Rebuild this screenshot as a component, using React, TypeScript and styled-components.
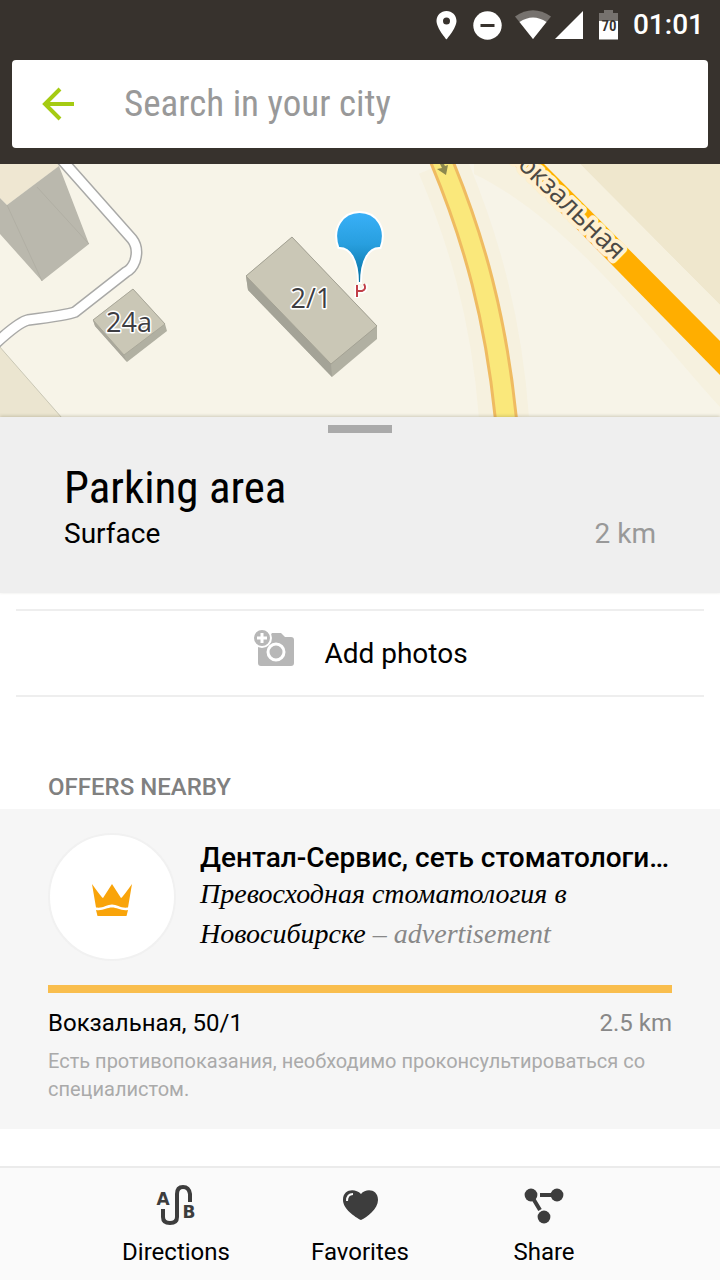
import React from "react";
import styled, { createGlobalStyle } from "styled-components";

const GlobalStyle = createGlobalStyle`
  *, *::before, *::after { box-sizing: border-box; }
  body {
    margin: 0;
    background: #ffffff;
    color: #000000;
    font-family: Roboto, "Liberation Sans", sans-serif;
  }
  h1, h2, h3, p { margin: 0; font-weight: 400; }
  button { border: 0; background: none; padding: 0; font: inherit; color: inherit; cursor: pointer; }
`;

const narrow = `"Roboto Condensed", "Arial Narrow", Roboto, sans-serif`;

const Screen = styled.div`
  display: flex;
  flex-direction: column;
  min-height: 100vh;
`;

const TopBar = styled.header`
  padding: 0 12px 16px;
  background: #37322d;
`;

const StatusBar = styled.div`
  display: flex;
  align-items: center;
  justify-content: flex-end;
  height: 60px;
  padding: 0 4px 10px 0;
  color: #ffffff;
`;

const StatusIcons = styled.svg`
  display: block;
  flex: none;
`;

const Clock = styled.time`
  margin-left: 12px;
  font-size: 28px;
  line-height: 32px;
  font-weight: 500;
`;

const SearchForm = styled.form`
  display: flex;
  align-items: center;
  height: 88px;
  padding-left: 28px;
  border-radius: 4px;
  background: #ffffff;
`;

const BackButton = styled.button`
  display: flex;
  flex: none;
  margin-right: 44px;
`;

const SearchInput = styled.input`
  flex: 1;
  min-width: 0;
  height: 84px;
  padding: 0 0 2px;
  border: 0;
  outline: 0;
  background: transparent;
  font-family: ${narrow};
  font-size: 37px;
  &::placeholder { color: #999999; opacity: 1; }
`;

const MapView = styled.svg`
  display: block;
  width: 100%;
  height: 253px;
  background: #f7f4e8;
`;

const MapLabel = styled.text`
  font-family: "Open Sans", "Noto Sans", sans-serif;
  font-size: 27px;
  fill: #3d3d42;
  stroke: #ffffff;
  stroke-width: 3px;
  stroke-linejoin: round;
  paint-order: stroke;
`;

const StreetLabel = styled(MapLabel)`
  fill: #4c4a45;
  stroke: #fff0d0;
  stroke-width: 8px;
`;

const PlaceHead = styled.section`
  padding: 8px 64px 43px;
  background: #efefef;
  box-shadow: 0 -1px 3px rgba(90, 85, 50, 0.25);
`;

const Handle = styled.div`
  width: 64px;
  height: 8px;
  margin: 0 auto 25px;
  background: #aaaaaa;
`;

const PlaceTitle = styled.h1`
  font-family: ${narrow};
  font-size: 45px;
  line-height: 60px;
`;

const Row = styled.div`
  display: flex;
  justify-content: space-between;
`;

const PlaceRow = styled(Row)`
  font-size: 28px;
  line-height: 32px;
`;

const Distance = styled.span`
  color: #999999;
`;

const OfferDistance = styled.span`
  color: #888888;
`;

const AddPhotos = styled.button`
  display: flex;
  align-items: center;
  justify-content: center;
  gap: 28px;
  height: 88px;
  margin: 16px;
  border-top: 2px solid #eeeeee;
  border-bottom: 2px solid #eeeeee;
  font-size: 28px;
`;

const OffersTitle = styled.h2`
  padding: 60px 48px 8px;
  color: #808080;
  font-size: 24px;
  line-height: 28px;
  font-weight: 500;
`;

const Offer = styled.article`
  padding: 24px 48px 26px;
  background: #f6f6f6;
`;

const OfferHead = styled.div`
  display: flex;
  gap: 24px;
  margin-bottom: 24px;
`;

const Logo = styled.div`
  display: flex;
  align-items: center;
  justify-content: center;
  flex: none;
  width: 128px;
  height: 128px;
  border: 2px solid #f1f1f1;
  border-radius: 50%;
  background: #ffffff;
`;

const OfferText = styled.div`
  flex: 1;
  min-width: 0;
  padding-top: 9px;
`;

const OfferName = styled.h3`
  overflow: hidden;
  white-space: nowrap;
  font-size: 28px;
  line-height: 32px;
  font-weight: 500;
`;

const Slogan = styled.p`
  max-width: 440px;
  font-family: "Liberation Serif", serif;
  font-size: 28px;
  line-height: 40px;
  font-style: italic;
`;

const AdMark = styled.span`
  color: #888888;
`;

const Accent = styled.div`
  height: 8px;
  background: #f9be4e;
`;

const OfferAddress = styled(Row)`
  margin-top: 16px;
  font-size: 24px;
  line-height: 28px;
`;

const Disclaimer = styled.p`
  margin-top: 10px;
  color: #aaaaaa;
  font-size: 20px;
  line-height: 28px;
`;

const Actions = styled.nav`
  position: sticky;
  bottom: 0;
  display: flex;
  height: 114px;
  margin-top: auto;
  padding: 0 84px;
  border-top: 2px solid #ebebeb;
  background: #fafafa;
`;

const Action = styled.button`
  display: flex;
  flex: 1;
  flex-direction: column;
  align-items: center;
  gap: 13px;
  padding-top: 17px;
  font-size: 24px;
  line-height: 28px;
`;

const ActionIcon = styled.svg`
  display: block;
  width: 44px;
  height: 40px;
  color: #3d3d3d;
`;

function StatusGlyphs() {
  return (
    <StatusIcons width="186" height="48" viewBox="435 0 186 48" aria-hidden="true">
      <path fill="#fff" fillRule="evenodd" d="M446.500 10C441 10 436.500 14.300 436.500 20c0 7 10 18.500 10 18.500S456.500 27 456.500 20c0-5.700-4.500-10-10-10zm0 6.500a3.500 3.500 0 1 1 0 7 3.500 3.500 0 0 1 0-7z" />
      <circle cx="487.500" cy="24.500" r="14.200" fill="#fff" />
      <rect x="480.500" y="23" width="14" height="3" fill="#37322d" />
      <path fill="#76726e" d="M515 15.500Q533 3 551 15.500L533 38z" />
      <path fill="#fff" d="M519.500 21Q533 12 546.500 21L533 38z" />
      <path fill="#fff" d="M583 10v28h-28z" />
      <path fill="#76726e" d="M599 12h5v-3h9v3h5v8h-19z" />
      <path fill="#fff" d="M599 20h19v18.500h-19z" />
      <text x="609" y="30" textAnchor="middle" fontFamily="Roboto Condensed, Roboto, sans-serif" fontSize="15" fontWeight="600" fill="#37322d">70</text>
    </StatusIcons>
  );
}

function CityMap() {
  return (
    <MapView viewBox="0 164 720 253" preserveAspectRatio="xMidYMid slice" role="img" aria-label="Map">
      <defs>
        <linearGradient id="pin" x1="0" y1="0" x2="0" y2="1">
          <stop offset="0" stopColor="#39b0f8" />
          <stop offset="0.45" stopColor="#289fdf" />
          <stop offset="1" stopColor="#036f9f" />
        </linearGradient>
      </defs>
      <path fill="#efe7d2" d="M0 164h62L7 205l-7-7z" />
      <path fill="#ebe5d0" stroke="#c9c7b5" d="M-1 346L62 418H-1z" />
      <path fill="#efe7cd" d="M580 164h140v141z" />
      <path fill="none" stroke="#f6f1df" strokeWidth="50" d="M442 164C470 230 496 310 504 418" />
      <path fill="#f6f1df" d="M474 164h106L720 305v102C650 330 570 220 474 174z" />
      <path fill="#bab8ad" d="M59 166L89 244 42 281 0 234v-36l7 7z" />
      <path fill="none" stroke="#b1afa4" d="M7 205l35 76M37 187l52 57" />
      <path fill="none" stroke="#a9a9a7" strokeWidth="12" strokeLinejoin="round" d="M62 160L132 239Q139 248 135 261Q132 269 126 272L75 312Q68 315 28 320Q19 322 -4 343" />
      <path fill="none" stroke="#fff" strokeWidth="9" strokeLinejoin="round" d="M62 160L132 239Q139 248 135 261Q132 269 126 272L75 312Q68 315 28 320Q19 322 -4 343" />
      <path fill="#b1b0a2" d="M93 320l40-31 32 35 2 7-40 31-32-36z" />
      <path fill="#aaa89c" d="M93 320l31 35 3 7-32-36z" />
      <path fill="#cac7b6" stroke="#aaa89a" d="M93 320l40-31 32 35-41 31z" />
      <path fill="#b1b0a2" d="M246 276l46-39 85 89v13l-45 38-84-87z" />
      <path fill="#a4a397" d="M246 276l85 88 1 13-84-87z" />
      <path fill="#cac7b6" stroke="#a4a294" d="M246 276l46-39 85 89-46 38z" />
      <path fill="none" stroke="#efbb61" strokeWidth="24" d="M439 155C475 240 496 320 506 420" />
      <path fill="none" stroke="#fae87b" strokeWidth="18" d="M439 155C475 240 496 320 506 420" />
      <path fill="#8c884e" d="M440 164l2 4-5 1 9 6 2-10-3 1-1-2z" />
      <path fill="#ffae00" d="M513 164h31L720 341v34z" />
      <StreetLabel textAnchor="end" transform="translate(615 261) rotate(44)">Вокзальная</StreetLabel>
      <MapLabel x="129" y="332" textAnchor="middle">24a</MapLabel>
      <MapLabel x="311" y="308" textAnchor="middle">2/1</MapLabel>
      <path fill="none" stroke="#fff" strokeWidth="5" d="M357 298v-13M357 291h6q3-1 2-7" />
      <path fill="none" stroke="#c13f48" strokeWidth="2" d="M357 297v-12M357 291h5q5-2 2-7" />
      <path fill="url(#pin)" stroke="#fff" strokeWidth="2" d="M338.500 248C331 228 343 212 359.500 212S388 228 380.500 248C369 247 361 260 361 283h-3C358 260 350 247 338.500 248z" />
    </MapView>
  );
}

export default function App() {
  return (
    <Screen>
      <GlobalStyle />
      <TopBar>
        <StatusBar>
          <StatusGlyphs />
          <Clock>01:01</Clock>
        </StatusBar>
        <SearchForm role="search" onSubmit={(e: React.FormEvent) => e.preventDefault()}>
          <BackButton type="button" aria-label="Back">
            <svg width="40" height="40" viewBox="0 0 40 40" fill="none" stroke="#a5cb12" strokeWidth="4" aria-hidden="true">
              <path d="M34 20H6M20 5L5 20l15 15" />
            </svg>
          </BackButton>
          <SearchInput type="search" aria-label="Search in your city" placeholder="Search in your city" />
        </SearchForm>
      </TopBar>

      <CityMap />

      <PlaceHead>
        <Handle />
        <PlaceTitle>Parking area</PlaceTitle>
        <PlaceRow>
          <span>Surface</span>
          <Distance>2 km</Distance>
        </PlaceRow>
      </PlaceHead>

      <AddPhotos type="button">
        <svg width="44" height="48" viewBox="1 0 44 48" aria-hidden="true">
          <path fill="#b7b7b7" d="M9 8h9l3-4h9l4 4h6q3 0 3 3v23q0 3-3 3H10q-3 0-3-3V11q0-3 2-3z" />
          <circle cx="25" cy="23" r="8" fill="none" stroke="#fff" strokeWidth="3" />
          <circle cx="11" cy="9" r="9" fill="#b7b7b7" stroke="#fff" strokeWidth="2" />
          <path stroke="#fff" strokeWidth="3" d="M6 9h10M11 4v10" />
        </svg>
        Add photos
      </AddPhotos>

      <OffersTitle>OFFERS NEARBY</OffersTitle>
      <Offer>
        <OfferHead>
          <Logo>
            <svg width="42" height="38" viewBox="0 -5 42 38" fill="#f9a40a" aria-hidden="true">
              <path d="M1 1q10 14 11 14L21 1l9 14Q31 15 41 1l-4 23.500c-7 1-11-3-16-3s-9 4-16 3z" />
              <path d="M5 27c7 1 11-2.500 16-2.500s9 3.500 16 2.500l-1.500 6h-29z" />
            </svg>
          </Logo>
          <OfferText>
            <OfferName>Дентал-Сервис, сеть стоматологи…</OfferName>
            <Slogan>
              Превосходная стоматология в Новосибирске <AdMark>– advertisement</AdMark>
            </Slogan>
          </OfferText>
        </OfferHead>
        <Accent />
        <OfferAddress>
          <span>Вокзальная, 50/1</span>
          <OfferDistance>2.5 km</OfferDistance>
        </OfferAddress>
        <Disclaimer>Есть противопоказания, необходимо проконсультироваться со специалистом.</Disclaimer>
      </Offer>

      <Actions>
        <Action type="button">
          <ActionIcon viewBox="0 0 44 40" aria-hidden="true">
            <path fill="none" stroke="currentColor" strokeWidth="4" d="M9 24v8q0 6 7 6t7-6V9q0-7 6-7t7 7v8" />
            <text x="9" y="20" textAnchor="middle" fontFamily="DejaVu Sans, sans-serif" fontWeight="700" fontSize="17" fill="currentColor">A</text>
            <text x="35" y="33" textAnchor="middle" fontFamily="DejaVu Sans, sans-serif" fontWeight="700" fontSize="17" fill="currentColor">B</text>
          </ActionIcon>
          Directions
        </Action>
        <Action type="button">
          <ActionIcon viewBox="0 0 44 40" aria-hidden="true">
            <path fill="currentColor" d="M23 35C17 32 5 24 5 15 5 4 17 3 23 9 28 3 40 4 40 15c0 9-11 17-17 20z" />
            <path fill="none" stroke="#fafafa" strokeWidth="2" d="M9 16q0-7 6-7" />
          </ActionIcon>
          Favorites
        </Action>
        <Action type="button">
          <ActionIcon viewBox="0 0 44 40" aria-hidden="true" fill="currentColor">
            <circle cx="9" cy="10" r="6.400" />
            <circle cx="35" cy="10" r="6.400" />
            <circle cx="22" cy="32" r="6.400" />
            <path fill="none" stroke="currentColor" strokeWidth="4" d="M18 10h17M9 10l9 15" />
          </ActionIcon>
          Share
        </Action>
      </Actions>
    </Screen>
  );
}
